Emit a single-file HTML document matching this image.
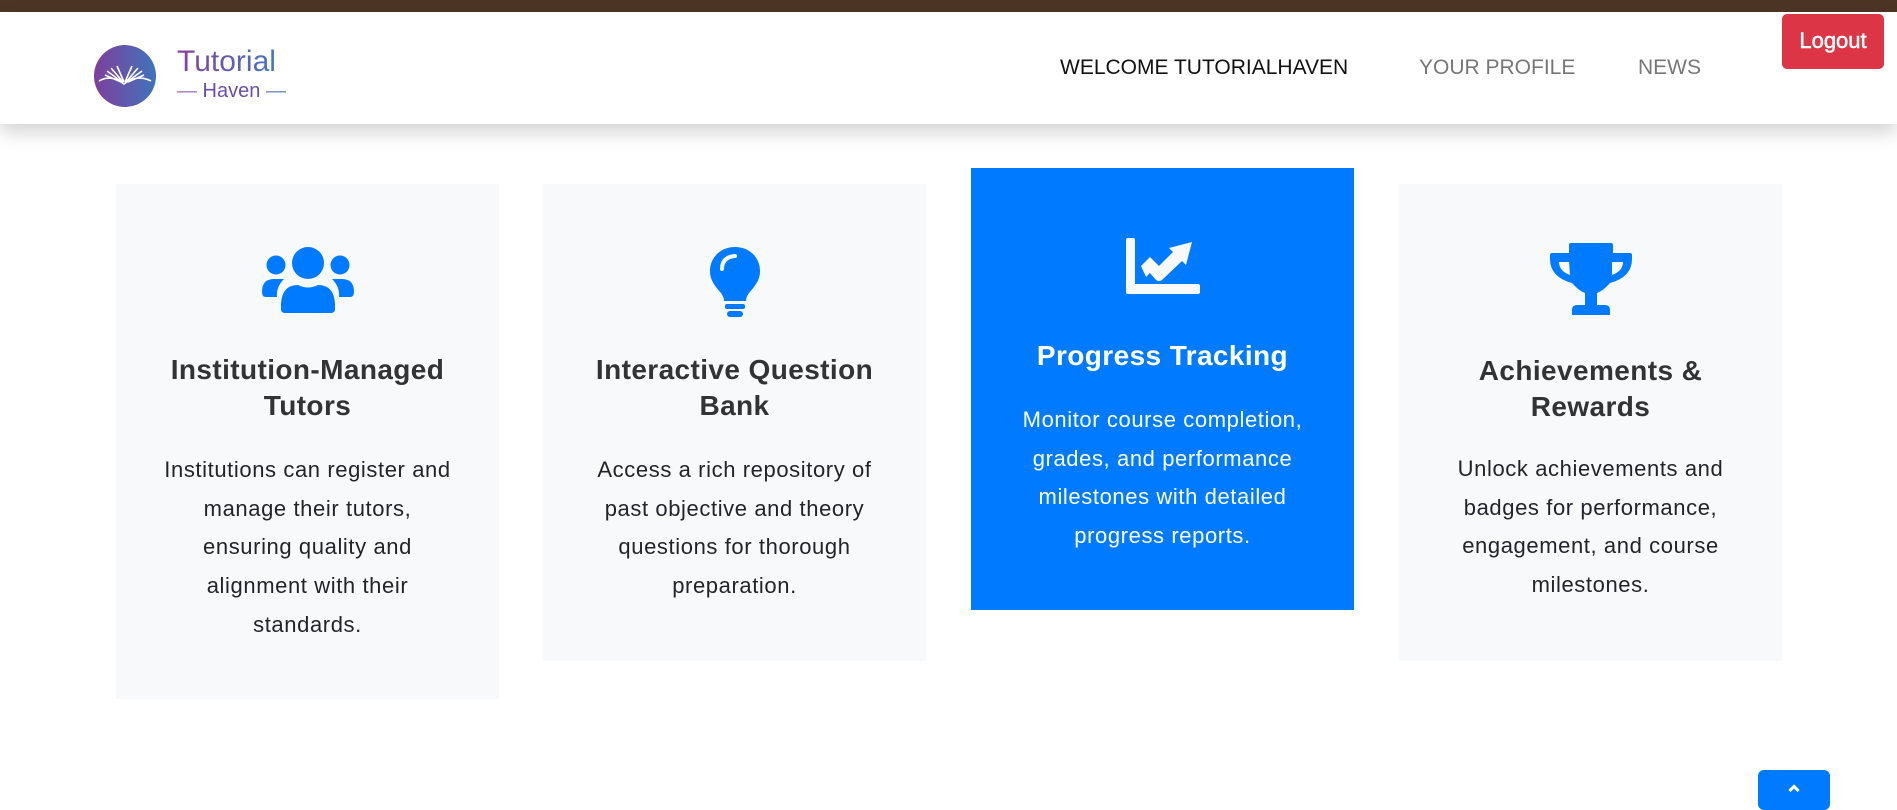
<!DOCTYPE html>
<html><head><meta charset="utf-8"><style>
*{box-sizing:border-box;margin:0;padding:0}
body{width:1897px;height:792px;overflow:hidden;background:#fff;font-family:"Liberation Sans",sans-serif;position:relative}
.top{position:absolute;left:0;top:0;width:1897px;height:12px;background:#4d3526}
.nav{position:absolute;left:0;top:12px;width:1897px;height:112px;background:#fff;box-shadow:0 8px 18px rgba(0,0,0,.18)}
.nav a{position:absolute;top:44px;font-size:21px;text-decoration:none;letter-spacing:0px}
.logout{position:absolute;left:1782px;top:14px;width:102px;height:55px;background:#dc3545;color:#fff;border-radius:5px;font-size:22px;text-align:center;line-height:53px;-webkit-text-stroke:0.5px #fff}
.card{position:absolute;width:383px;background:#f8f9fa;text-align:center;color:#212529}
.card h3{font-size:28px;font-weight:bold;line-height:36px;color:#333;letter-spacing:0.4px}
.card p{font-size:22px;line-height:38.7px;margin-top:22px;letter-spacing:0.6px}
.card svg{display:block;margin:0 auto}
.blue{background:#007bff;color:#fff}
.blue h3{color:#fff}
</style></head><body>
<div class="top"></div>
<div class="nav">
 <svg style="position:absolute;left:93px;top:32px" width="64" height="64" viewBox="0 0 64 64">
  <defs><linearGradient id="g" x1="0" x2="1"><stop offset="0" stop-color="#7e3f9c"/><stop offset="1" stop-color="#3f74bb"/></linearGradient></defs>
  <circle cx="32" cy="32" r="31" fill="url(#g)"/>
  <g stroke="#fff" stroke-width="1.6" fill="none">
   <path d="M6 37 Q18 30 31 40 Q44 30 58 37"/>
   <path d="M30 38 L18 24 M29 38 L14 27 M28 38 L12 31 M31 38 L24 22"/>
   <path d="M33 38 L45 24 M34 38 L49 27 M35 38 L51 31 M32 38 L39 22"/>
  </g>
 </svg>
 <div style="position:absolute;left:177px;top:33px;font-size:30px;background:linear-gradient(90deg,#8a3f9e,#4277c0);-webkit-background-clip:text;color:transparent">Tutorial</div>
 <div style="position:absolute;left:177px;top:68px;font-size:20px;color:#6a4ea8"><span style="color:#a07ac0">—</span> Haven <span style="color:#6a8ac0">—</span></div>
 <a style="left:1060px;color:#111">WELCOME TUTORIALHAVEN</a>
 <a style="left:1419px;color:#777">YOUR PROFILE</a>
 <a style="left:1638px;color:#777">NEWS</a>
</div>
<div class="logout">Logout</div>

<div class="card" style="left:116px;top:184px;height:515px;padding-top:63px">
 <svg width="92" height="66" viewBox="0 0 92 66" fill="#007bff">
  <circle cx="46" cy="16" r="16"/><circle cx="14" cy="18" r="9.5"/><circle cx="78" cy="18" r="9.5"/>
  <path d="M0 45 Q0 32 12 32 H22 Q14 40 15 50 H4 Q0 50 0 45Z"/>
  <path d="M92 45 Q92 32 80 32 H70 Q78 40 77 50 H88 Q92 50 92 45Z"/>
  <path d="M19 62 Q18 38 36 38 Q46 43 56 38 Q74 38 73 62 Q73 66 69 66 H23 Q19 66 19 62Z"/>
 </svg>
 <h3 style="margin-top:39px">Institution-Managed<br>Tutors</h3>
 <p style="margin-top:27px">Institutions can register and<br>manage their tutors,<br>ensuring quality and<br>alignment with their<br>standards.</p>
</div>

<div class="card" style="left:543px;top:184px;height:477px;padding-top:63px">
 <svg width="54" height="70" viewBox="0 0 54 70" fill="#007bff">
  <path d="M27 0 C12 0 2 11 2 24 C2 34 8 40 13 46 C15 49 16 51 16 54 H38 C38 51 39 49 41 46 C46 40 52 34 52 24 C52 11 42 0 27 0Z"/>
  <path d="M14 22 Q14 10 27 9" stroke="#f8f9fa" stroke-width="4" fill="none" stroke-linecap="round"/>
  <rect x="17" y="57" width="20" height="5" rx="2"/><rect x="19" y="64" width="16" height="6" rx="3"/>
 </svg>
 <h3 style="margin-top:35px">Interactive Question<br>Bank</h3>
 <p style="margin-top:27px">Access a rich repository of<br>past objective and theory<br>questions for thorough<br>preparation.</p>
</div>

<div class="card blue" style="left:971px;top:168px;height:442px;padding-top:70px">
 <svg width="74" height="56" viewBox="0 0 74 56" fill="#f8f9fa">
  <path d="M0 2 Q0 0 2 0 H7 Q9 0 9 2 V46 H72 Q74 46 74 48 V54 Q74 56 72 56 H2 Q0 56 0 54Z"/>
  <path d="M15 28 L24 19 L33 28 L47 14 L43 10 L66 4 L60 27 L56 23 L36 42 Q33 44 30 42 L24 35 L20 39Z"/>
 </svg>
 <h3 style="margin-top:44px">Progress Tracking</h3>
 <p style="margin-top:27px">Monitor course completion,<br>grades, and performance<br>milestones with detailed<br>progress reports.</p>
</div>

<div class="card" style="left:1399px;top:184px;height:477px;padding-top:59px">
 <svg width="82" height="72" viewBox="0 0 82 72" fill="#007bff">
  <path d="M19 2 Q19 0 21 0 H61 Q63 0 63 2 V10 H80 Q82 10 82 12 V16 Q82 34 60 40 Q53 48 47 50 V62 H55 Q60 62 60 67 V72 H22 V67 Q22 62 27 62 H35 V50 Q29 48 22 40 Q0 34 0 16 V12 Q0 10 2 10 H19Z M9 19 Q9 28 20 32 L19 19Z M73 19 L62 19 L62 32 Q73 28 73 19Z"/>
 </svg>
 <h3 style="margin-top:38px">Achievements &amp;<br>Rewards</h3>
 <p style="margin-top:25px">Unlock achievements and<br>badges for performance,<br>engagement, and course<br>milestones.</p>
</div>

<div style="position:absolute;left:1758px;top:770px;width:72px;height:40px;background:#007bff;border-radius:6px"></div>
<div style="position:absolute;left:1790px;top:786px;width:8px;height:8px;border-left:3px solid #fff;border-top:3px solid #fff;transform:rotate(45deg)"></div>
</body></html>
